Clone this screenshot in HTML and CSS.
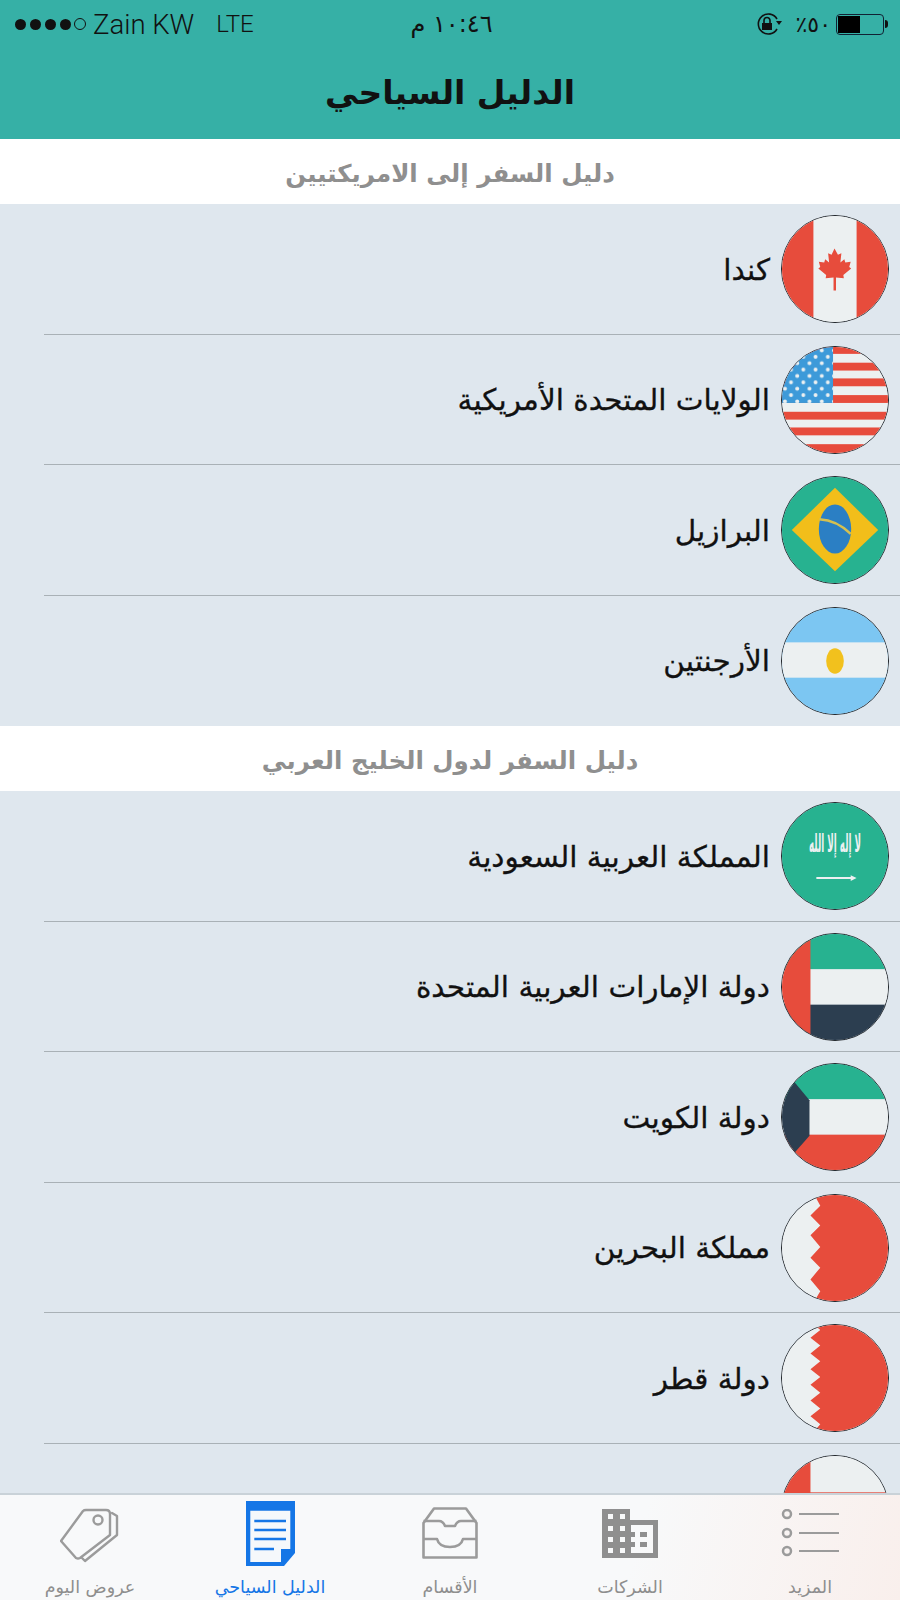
FILE: index.html
```html
<!DOCTYPE html>
<html lang="ar">
<head>
<meta charset="utf-8">
<title>الدليل السياحي</title>
<link rel="stylesheet" href="styles.css">
</head>
<body>
<div class="app">
  <header class="top">
    <div class="status">
      <div class="status-left">
        <span class="dots"><i></i><i></i><i></i><i></i><i class="off"></i></span>
        <span class="carrier">Zain KW</span>
        <span class="net">LTE</span>
      </div>
      <div class="clock" dir="rtl">١٠:٤٦ م</div>
      <div class="status-right">
        <svg class="lock" viewBox="0 0 26 22"><path d="M21 6A10 10 0 1 0 21 16" fill="none" stroke="#111" stroke-width="1.600"/><path d="M20 8h6l-3 4z" fill="#111"/><rect x="6" y="10" width="10" height="7" fill="#111"/><path d="M8 10V7.500a3 3 0 0 1 6 0V10" fill="none" stroke="#111" stroke-width="1.600"/></svg>
        <span class="pct" dir="rtl">٥٠٪</span>
        <span class="battery"><span class="level"></span></span>
        <span class="nub"></span>
      </div>
    </div>
    <h1 class="title" dir="rtl">الدليل السياحي</h1>
  </header>

  <main class="list" dir="rtl">
    <h2 class="section">دليل السفر إلى الامريكتيين</h2>

    <div class="row">
      <div class="flag"><svg viewBox="0 0 108 108"><rect width="108" height="108" fill="#ecf0f1"/><rect width="32" height="108" fill="#e74c3c"/><rect x="76" width="32" height="108" fill="#e74c3c"/><path d="M53.500 33l3.500 6.500 3.500-1.500-1 9.500 4-3.500 1 3.500 5.500-1-1.500 5.500 2 1.500-8 6.500.5 3.500-8-.8V76h-2.500v-13.300l-8 .8.5-3.500-8-6.500 2-1.500-1.500-5.500 5.500 1 1-3.500 4 3.500-1-9.500 3.500 1.500z" fill="#e74c3c"/></svg></div>
      <span class="name">كندا</span>
    </div>
    <div class="row">
      <div class="flag"><svg viewBox="0 0 108 108"><defs><pattern id="stars" width="12.500" height="13" patternUnits="userSpaceOnUse"><circle cx="3" cy="3.500" r="2" fill="#ecf0f1"/><circle cx="9.200" cy="10" r="2" fill="#ecf0f1"/></pattern></defs><rect width="108" height="108" fill="#ecf0f1"/><g fill="#e74c3c"><rect width="108" height="7"/><rect y="16" width="108" height="8"/><rect y="32" width="108" height="8"/><rect y="49" width="108" height="8"/><rect y="66" width="108" height="8"/><rect y="82" width="108" height="8"/><rect y="99" width="108" height="9"/></g><rect width="52" height="57" fill="#3d9ad9"/><rect width="52" height="57" fill="url(#stars)"/></svg></div>
      <span class="name">الولايات المتحدة الأمريكية</span>
    </div>
    <div class="row">
      <div class="flag"><svg viewBox="0 0 108 108"><rect width="108" height="108" fill="#27b290"/><path d="M54 11L98 54 54 96 10 54z" fill="#f2be1a"/><ellipse cx="54" cy="53" rx="16.500" ry="25" fill="#2b7fc4"/><path d="M38 43Q56 44 70 58" fill="none" stroke="#d5c050" stroke-width="2.500"/></svg></div>
      <span class="name">البرازيل</span>
    </div>
    <div class="row">
      <div class="flag"><svg viewBox="0 0 108 108"><rect width="108" height="108" fill="#7cc6f2"/><rect y="35" width="108" height="36" fill="#ecf0f1"/><ellipse cx="54" cy="54" rx="9" ry="13" fill="#f2c11d"/></svg></div>
      <span class="name">الأرجنتين</span>
    </div>

    <h2 class="section">دليل السفر لدول الخليج العربي</h2>

    <div class="row">
      <div class="flag"><svg viewBox="0 0 108 108"><rect width="108" height="108" fill="#27b290"/><g transform="translate(54 50) scale(1 2)"><text class="shahada" text-anchor="middle" textLength="53" lengthAdjust="spacingAndGlyphs">لا إله إلا الله</text></g><path d="M35 75.500H70V73.500l6 3-6 3V77.500H35z" fill="#ecf0f1"/></svg></div>
      <span class="name">المملكة العربية السعودية</span>
    </div>
    <div class="row">
      <div class="flag"><svg viewBox="0 0 108 108"><rect width="108" height="36" fill="#27b290"/><rect y="36" width="108" height="36" fill="#ecf0f1"/><rect y="72" width="108" height="36" fill="#2c3e50"/><rect width="29" height="108" fill="#e74c3c"/></svg></div>
      <span class="name">دولة الإمارات العربية المتحدة</span>
    </div>
    <div class="row">
      <div class="flag"><svg viewBox="0 0 108 108"><rect width="108" height="36" fill="#27b290"/><rect y="36" width="108" height="36" fill="#ecf0f1"/><rect y="72" width="108" height="36" fill="#e74c3c"/><path d="M0 3L28 37V73L0 105z" fill="#2c3e50"/></svg></div>
      <span class="name">دولة الكويت</span>
    </div>
    <div class="row">
      <div class="flag"><svg viewBox="0 0 108 108"><rect width="108" height="108" fill="#ecf0f1"/><path d="M33 0L39 11 29 21 39 31 29 41 39 53 29 64 39 74 29 86 39 98 33 108H108V0z" fill="#e74c3c"/></svg></div>
      <span class="name">مملكة البحرين</span>
    </div>
    <div class="row">
      <div class="flag"><svg viewBox="0 0 108 108"><rect width="108" height="108" fill="#ecf0f1"/><path d="M33 0L39 5 29 13 39 21 29 29 39 37 29 45 39 53 29 61 39 69 29 77 39 85 29 93 39 101 33 108H108V0z" fill="#e74c3c"/></svg></div>
      <span class="name">دولة قطر</span>
    </div>
    <div class="row">
      <div class="flag"><svg viewBox="0 0 108 108"><rect width="108" height="108" fill="#ecf0f1"/><rect width="29" height="108" fill="#e74c3c"/><rect y="37" width="108" height="71" fill="#e74c3c"/></svg></div>
    </div>
  </main>

  <nav class="tabs" dir="rtl">
    <a class="tab">
      <span class="icon"><svg class="i-list" viewBox="0 0 60 48"><g fill="none" stroke="#9b9b9b"><circle cx="7" cy="5" r="4" stroke-width="2.500"/><circle cx="7" cy="24" r="4" stroke-width="2.500"/><circle cx="7" cy="42" r="4" stroke-width="2.500"/><path d="M19 5H59M19 24H59M19 42H59" stroke-width="1.800"/></g></svg></span>
      <span class="label">المزيد</span>
    </a>
    <a class="tab">
      <span class="icon"><svg class="i-building" viewBox="0 0 56 49"><path fill="#8f8f8f" fill-rule="evenodd" d="M0 0H28V11H56V49H0ZM6 5V10H11V5ZM18 5V10H23V5ZM6 17V22H11V17ZM18 17V22H23V17ZM6 28V33H11V28ZM18 28V33H23V28ZM6 39V44H11V39ZM18 39V44H23V39ZM29 16V44H51V16Z"/><path fill="#8f8f8f" d="M38 23H45V28H38ZM38 33H45V38H38ZM29 23H33V28H29ZM29 33H33V38H29Z"/></svg></span>
      <span class="label">الشركات</span>
    </a>
    <a class="tab">
      <span class="icon"><svg class="i-box" viewBox="0 0 56 52"><g fill="none" stroke="#9b9b9b" stroke-width="2.600" stroke-linejoin="round"><path d="M12 1.500H44L54.500 16V50.500H1.500V16Z"/><path d="M1.500 14H17Q21 14 23 19H33Q35 14 39 14H54.500"/><path d="M1.500 32H15Q17 40 28 40Q39 40 41 32H54.500"/></g></svg></span>
      <span class="label">الأقسام</span>
    </a>
    <a class="tab active">
      <span class="icon"><svg class="i-doc" viewBox="0 0 49 65"><path fill="#1576e6" d="M0 0H49V52L38 65H0Z"/><path fill="#f5f8fb" d="M4.300 9.700H44.300V48H35V61H4.300Z"/><path fill="none" stroke="#1576e6" stroke-width="2.500" d="M8.300 20H40M8.300 29H40M8.300 38H40M8.300 48H28"/></svg></span>
      <span class="label">الدليل السياحي</span>
    </a>
    <a class="tab">
      <span class="icon"><svg class="i-tag" viewBox="0 0 60 56"><g fill="none" stroke="#9b9b9b" stroke-width="2.400" stroke-linejoin="round" stroke-linecap="round"><path d="M1 33L23 3Q24 2 26 2H46Q50 2 50 6V27L20 50Q18 51 16 50Z"/><circle cx="38" cy="12" r="4.500"/><path d="M52 5L57 8V27L25 53L22 50"/></g></svg></span>
      <span class="label">عروض اليوم</span>
    </a>
  </nav>
</div>
</body>
</html>
```
FILE: styles.css
```css
* { box-sizing: border-box; }
html, body { margin: 0; padding: 0; }
body { font-family: "DejaVu Sans", "Noto Sans", sans-serif; background: #dfe7ee; }
.app { width: 900px; height: 1600px; display: flex; flex-direction: column; overflow: hidden; }

.top { flex: none; height: 139px; background: #36b0a6; display: flex; flex-direction: column; }
.status { height: 48px; padding: 0 12px 0 15px; display: grid; grid-template-columns: 1fr auto 1fr; align-items: center; color: #111; }
.status-left { display: flex; align-items: center; }
.dots { display: flex; gap: 4px; align-items: center; }
.dots i { width: 11px; height: 11px; border-radius: 50%; background: #111; }
.dots i.off { width: 12px; height: 12px; background: none; border: 1px solid #111; margin-left: -1px; }
.carrier { margin-left: 7px; font: 300 27.500px Roboto, "Liberation Sans", sans-serif; }
.net { margin-left: 22px; font: 300 24px Roboto, "Liberation Sans", sans-serif; }
.clock { font-size: 24px; }
.status-right { display: flex; justify-content: flex-end; align-items: center; }
.lock { width: 26px; height: 22px; margin-right: 14px; }
.pct { font-size: 22px; letter-spacing: 7px; margin-right: 5px; }
.battery { width: 48px; height: 21px; border: 1.500px solid #123; border-radius: 4px; padding: 1px; display: flex; }
.level { width: 22px; background: #000; }
.nub { width: 3px; height: 8px; background: #111; border-radius: 0 3px 3px 0; margin-left: 1px; }
.title { margin: 0; flex: 1; display: flex; align-items: center; justify-content: center; padding-bottom: 2px; font-size: 33px; font-weight: 700; color: #111; }

.list { flex: 1; min-height: 0; overflow: hidden; }
.section { margin: 0; height: 65px; padding-top: 3px; background: #fff; display: flex; align-items: center; justify-content: center; font-size: 24.500px; font-weight: 700; color: #8f8f8f; }
.row { height: 130.500px; position: relative; display: flex; align-items: center; gap: 11px; padding-right: 11px; }
.row::after { content: ""; position: absolute; left: 44px; right: 0; bottom: 0; height: 1px; background: #a9b1b6; }
.row:has(+ .section)::after { display: none; }
.flag { width: 108px; height: 108px; flex: none; border-radius: 50%; overflow: hidden; border: 1.500px solid #1e2328; }
.flag svg { display: block; width: 100%; height: 100%; }
.shahada { font-size: 13px; font-weight: 700; fill: #ecf0f1; }
.name { font-size: 29.500px; color: #111; -webkit-text-stroke: 0.3px #111; padding-top: 1px; }

.tabs { flex: none; height: 107px; display: grid; grid-template-columns: repeat(5, 1fr); border-top: 2px solid #c9d2d8; background: linear-gradient(105deg, #f8f9fa 70%, #f9efec 100%); }
.tab { display: flex; flex-direction: column; align-items: center; color: #8e8e8e; }
.tab.active { color: #1576e6; }
.icon { height: 81px; display: flex; align-items: center; justify-content: center; padding-bottom: 5px; }
.label { font-size: 17.500px; line-height: 22px; }
.i-list { width: 60px; height: 48px; }
.i-building { width: 56px; height: 49px; }
.i-box { width: 56px; height: 52px; }
.i-doc { width: 49px; height: 65px; }
.i-tag { width: 60px; height: 56px; margin-top: 6px; }
```
